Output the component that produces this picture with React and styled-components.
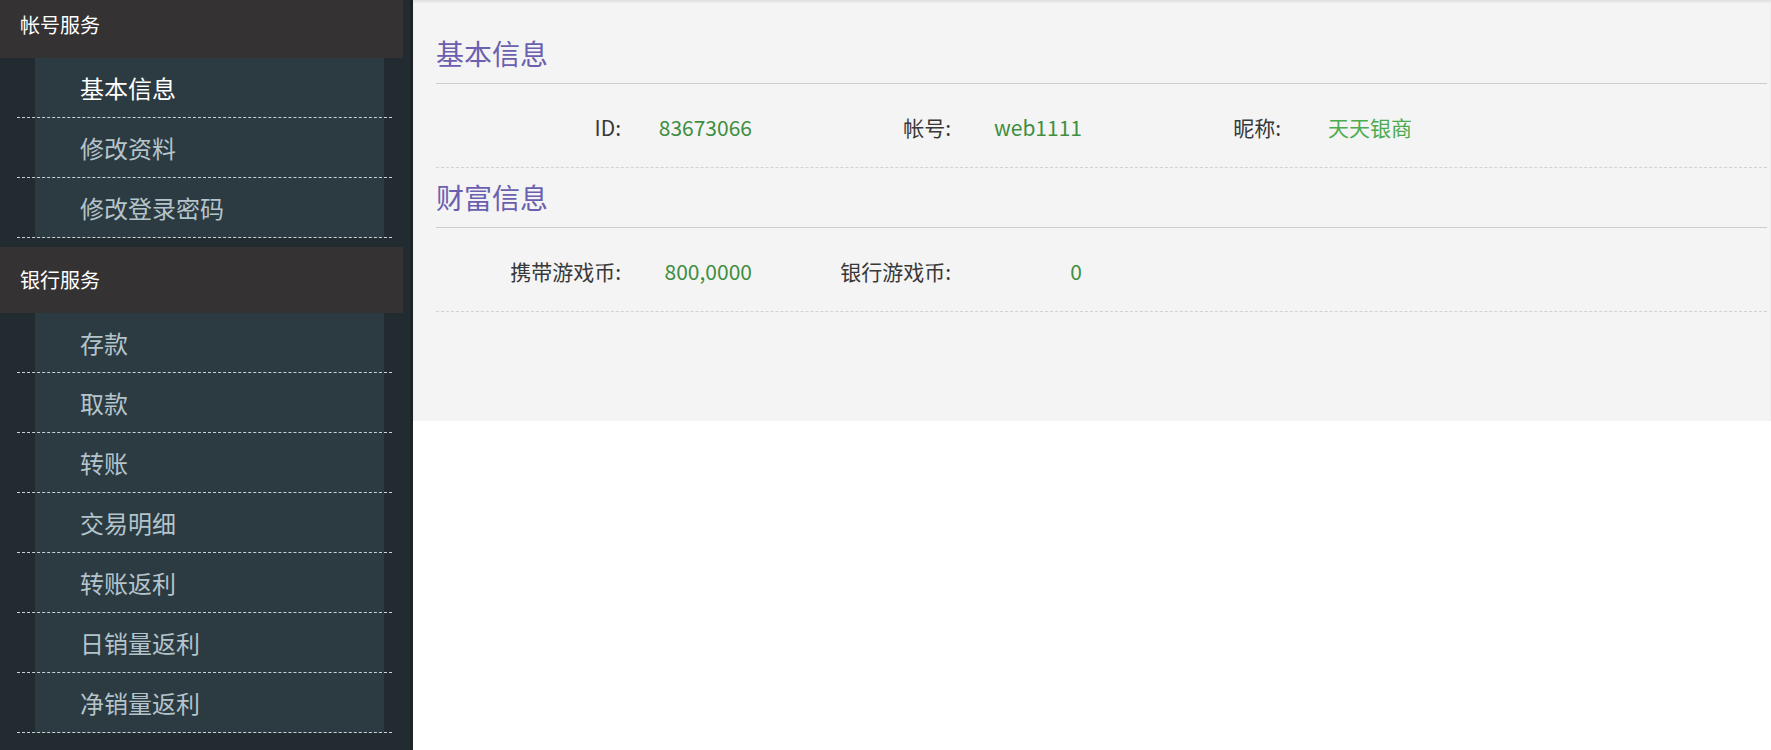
import React from 'react';
import styled, { createGlobalStyle } from 'styled-components';

const GlobalStyle = createGlobalStyle`
  body {
    margin: 0;
    background: #ffffff;
    font-family: "Noto Sans CJK SC", "Noto Sans", sans-serif;
  }
  ul {
    list-style: none;
    margin: 0;
    padding: 0;
  }
`;

const Page = styled.div`
  display: flex;
  height: 750px;
  overflow: hidden;
`;

const Sidebar = styled.aside`
  width: 413px;
  flex-shrink: 0;
  height: 750px;
  overflow: hidden;
  background: #222b30;
  box-shadow: inset -3px 0 0 #1d2427;
`;

const SideInner = styled.div`
  margin-top: -8px;
`;

const Group = styled.div`
  margin-bottom: 9px;
`;

const GroupTitle = styled.div`
  height: 66px;
  line-height: 66px;
  margin-right: 10px;
  padding-left: 20px;
  background: #353233;
  color: #ffffff;
  font-size: 20px;
`;

const Menu = styled.ul`
  && {
    margin: 0 29px 0 35px;
  }
  background: #2c3a41;
`;

const MenuItem = styled.li`
  margin: 0 -8px 0 -18px;
  height: 59px;
  line-height: 59px;
  padding-left: 63px;
  border-bottom: 1px dashed #c9d2d6;
  font-size: 24px;
  color: ${p => (p.$active ? '#ffffff' : '#b4c4cb')};
  cursor: pointer;
`;

const Main = styled.main`
  flex: 1;
  min-width: 0;
`;

const Panel = styled.div`
  background: #f4f4f4;
  padding: 24px 4px 109px 23px;
  box-shadow: inset 0 2px 2px rgba(0, 0, 0, 0.08);
`;

const SectionTitle = styled.h2`
  margin: 0;
  height: 59px;
  line-height: 59px;
  font-size: 28px;
  font-weight: normal;
  color: #6b5fb0;
  border-bottom: 1px solid #cccccc;
`;

const InfoRow = styled.div`
  display: grid;
  grid-template-columns: 185px 131px 199px 131px 199px 131px;
  align-items: center;
  box-sizing: content-box;
  height: 81px;
  padding-top: 2px;
  border-bottom: 1px dashed #d2d2d2;
  font-size: 21px;
`;

const Label = styled.span`
  text-align: right;
  color: #383838;
`;

const Value = styled.span`
  text-align: right;
  color: ${p => p.$color || '#3e8e41'};
`;

const groups = [
  {
    title: '帐号服务',
    items: ['基本信息', '修改资料', '修改登录密码'],
  },
  {
    title: '银行服务',
    items: ['存款', '取款', '转账', '交易明细', '转账返利', '日销量返利', '净销量返利'],
  },
];

const sections = [
  {
    title: '基本信息',
    fields: [
      { label: 'ID:', value: '83673066' },
      { label: '帐号:', value: 'web1111' },
      { label: '昵称:', value: '天天银商', color: '#4cab4f' },
    ],
  },
  {
    title: '财富信息',
    fields: [
      { label: '携带游戏币:', value: '800,0000' },
      { label: '银行游戏币:', value: '0' },
    ],
  },
];

export default function App() {
  return (
    <Page>
      <GlobalStyle />
      <Sidebar>
        <SideInner>
          {groups.map(g => (
            <Group key={g.title}>
              <GroupTitle>{g.title}</GroupTitle>
              <Menu>
                {g.items.map(item => (
                  <MenuItem key={item} $active={item === '基本信息'}>
                    {item}
                  </MenuItem>
                ))}
              </Menu>
            </Group>
          ))}
        </SideInner>
      </Sidebar>
      <Main>
        <Panel>
          {sections.map(s => (
            <section key={s.title}>
              <SectionTitle>{s.title}</SectionTitle>
              <InfoRow>
                {s.fields.map(f => (
                  <React.Fragment key={f.label}>
                    <Label>{f.label}</Label>
                    <Value $color={f.color}>{f.value}</Value>
                  </React.Fragment>
                ))}
              </InfoRow>
            </section>
          ))}
        </Panel>
      </Main>
    </Page>
  );
}
